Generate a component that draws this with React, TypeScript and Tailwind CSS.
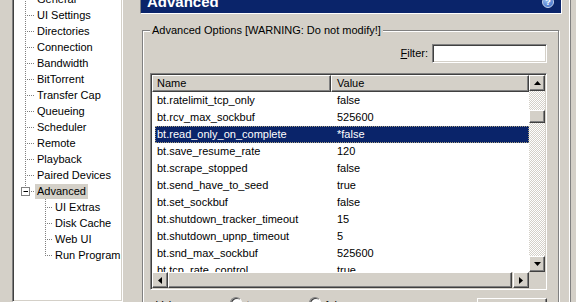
const rows: [string, string][] = [
  ["bt.ratelimit_tcp_only", "false"],
  ["bt.rcv_max_sockbuf", "525600"],
  ["bt.read_only_on_complete", "*false"],
  ["bt.save_resume_rate", "120"],
  ["bt.scrape_stopped", "false"],
  ["bt.send_have_to_seed", "true"],
  ["bt.set_sockbuf", "false"],
  ["bt.shutdown_tracker_timeout", "15"],
  ["bt.shutdown_upnp_timeout", "5"],
  ["bt.snd_max_sockbuf", "525600"],
  ["bt.tcp_rate_control", "true"],
];

const topItems = [
  "General",
  "UI Settings",
  "Directories",
  "Connection",
  "Bandwidth",
  "BitTorrent",
  "Transfer Cap",
  "Queueing",
  "Scheduler",
  "Remote",
  "Playback",
  "Paired Devices",
];

const subItems = ["UI Extras", "Disk Cache", "Web UI", "Run Program"];

const raised =
  "border border-t-white border-l-white border-b-[#404040] border-r-[#404040] shadow-[inset_-1px_-1px_0_#808080]";
const sunken =
  "border border-t-[#808080] border-l-[#808080] border-b-white border-r-white shadow-[inset_1px_1px_0_#404040,inset_-1px_-1px_0_#d4d0c8]";

type Kind = "top" | "advanced" | "sub" | "subLast";

function Connector({ kind }: { kind: Kind }) {
  if (kind === "top") {
    return (
      <svg width="21" height="16" className="shrink-0">
        <line x1="11.5" y1="0" x2="11.5" y2="16" stroke="#808080" strokeDasharray="1 1" />
        <line x1="13" y1="8.5" x2="21" y2="8.5" stroke="#808080" strokeDasharray="1 1" />
      </svg>
    );
  }
  if (kind === "advanced") {
    return (
      <svg width="21" height="16" className="shrink-0">
        <line x1="11.5" y1="0" x2="11.5" y2="4" stroke="#808080" strokeDasharray="1 1" />
        <rect x="7.5" y="4.5" width="8" height="8" fill="#fff" stroke="#808080" />
        <line x1="9.5" y1="8.5" x2="14" y2="8.5" stroke="#000" />
        <line x1="17" y1="8.5" x2="21" y2="8.5" stroke="#808080" strokeDasharray="1 1" />
      </svg>
    );
  }
  return (
    <svg width="39" height="16" className="shrink-0">
      <line
        x1="31.5"
        y1="0"
        x2="31.5"
        y2={kind === "subLast" ? 9 : 16}
        stroke="#808080"
        strokeDasharray="1 1"
      />
      <line x1="33" y1="8.5" x2="39" y2="8.5" stroke="#808080" strokeDasharray="1 1" />
    </svg>
  );
}

function TreeRow({ label, kind, selected }: { label: string; kind: Kind; selected?: boolean }) {
  return (
    <div className="flex h-[16px] items-center">
      <Connector kind={kind} />
      <span
        className={`px-[2px] leading-[15px] whitespace-nowrap ${selected ? "bg-[#d4d0c8]" : ""}`}
      >
        {label}
      </span>
    </div>
  );
}

function Arrow({ dir }: { dir: "up" | "down" | "left" | "right" }) {
  const pts = {
    up: "3.5,0 7,4 0,4",
    down: "0,0 7,0 3.5,4",
    left: "4,0 4,7 0,3.5",
    right: "0,0 4,3.5 0,7",
  }[dir];
  const vertical = dir === "up" || dir === "down";
  return (
    <svg width={vertical ? 7 : 4} height={vertical ? 4 : 7}>
      <polygon points={pts} fill="#000" />
    </svg>
  );
}

function ScrollButton({ dir }: { dir: "up" | "down" | "left" | "right" }) {
  return (
    <div className={`flex h-[16px] w-[16px] shrink-0 items-center justify-center bg-[#d4d0c8] ${raised}`}>
      <Arrow dir={dir} />
    </div>
  );
}

const track =
  "bg-[repeating-conic-gradient(#d4d0c8_0_25%,#ffffff_0_50%)] bg-size-[2px_2px]";

function OptionsList() {
  return (
    <div className={`flex h-[217px] w-[397px] flex-col bg-white ${sunken} p-px`}>
      <div className="flex min-h-0 flex-1">
        <div className="flex min-w-0 flex-1 flex-col overflow-hidden">
          <div className="flex h-[17px] shrink-0 bg-[#d4d0c8]">
            <div className={`flex w-[179px] items-center pl-[4px] ${raised}`}>Name</div>
            <div className={`flex flex-1 items-center pl-[5px] ${raised}`}>Value</div>
          </div>
          {rows.map(([name, value], i) => {
            const selected = i === 2;
            return (
              <div
                key={name}
                className={`ml-[3px] flex h-[17px] shrink-0 items-center ${
                  selected ? "border border-dotted border-[#a8a080] bg-[#0a246a] text-white" : "border border-transparent"
                }`}
              >
                <div className="w-[175px] pl-[1px] whitespace-nowrap">{name}</div>
                <div className="pl-[6px]">{value}</div>
              </div>
            );
          })}
        </div>
        <div className="flex w-[16px] flex-col">
          <ScrollButton dir="up" />
          <div className={`flex-1 ${track}`}>
            <div className={`mt-[19px] h-[13px] bg-[#d4d0c8] ${raised}`} />
          </div>
          <ScrollButton dir="down" />
        </div>
      </div>
      <div className="flex h-[16px] shrink-0 bg-[#d4d0c8]">
        <ScrollButton dir="left" />
        <div className={`mr-px flex-1 ${raised}`} />
        <ScrollButton dir="right" />
        <div className="w-[16px]" />
      </div>
    </div>
  );
}

function Radio() {
  return (
    <span className="inline-block h-[12px] w-[12px] shrink-0 rounded-full border border-t-[#808080] border-l-[#808080] border-b-white border-r-white bg-white shadow-[inset_1px_1px_0_#404040]" />
  );
}

export default function App() {
  return (
    <div className="flex h-[302px] w-[576px] items-start overflow-hidden bg-[#d4d0c8] font-['Liberation_Sans',Arial,sans-serif] text-[11px] text-black">
      <div className={`ml-[12px] mt-[-11px] h-[313px] w-[111px] shrink-0 bg-white ${sunken} p-px`}>
        {topItems.map((t) => (
          <TreeRow key={t} label={t} kind="top" />
        ))}
        <TreeRow label="Advanced" kind="advanced" selected />
        {subItems.map((t, i) => (
          <TreeRow key={t} label={t} kind={i === subItems.length - 1 ? "subLast" : "sub"} />
        ))}
      </div>

      <div className="ml-[17px] flex h-full w-[422px] shrink-0 flex-col">
        <div className="flex h-[14px] shrink-0 items-start justify-between overflow-hidden border-l border-r border-b border-l-[#808080] border-r-white border-b-white bg-[#0a246a] pl-[6px] pr-[7px]">
          <span className="mt-[-6px] text-[15px] leading-[15px] font-bold text-white">Advanced</span>
          <span className="mt-[-4px] flex h-[12px] w-[12px] items-center justify-center rounded-full border border-[#c8d8f0] bg-[radial-gradient(circle_at_35%_30%,#9cc0f0,#2f5fc0)] text-[9px] leading-none font-bold text-white">
            ?
          </span>
        </div>

        <fieldset className="mt-[9px] ml-[2px] w-[417px] border border-[#808080] pr-[11px] pb-[20px] pl-[7px] shadow-[1px_1px_0_#ffffff,inset_1px_1px_0_#ffffff]">
          <legend className="bg-[#d4d0c8] px-[2px] leading-[14px]">
            Advanced Options [WARNING: Do not modify!]
          </legend>
          <div className="mt-[7px] flex items-center justify-end gap-[4px]">
            <span>
              <span className="underline">F</span>ilter:
            </span>
            <div className={`h-[19px] w-[115px] bg-white ${sunken}`} />
          </div>
          <div className="mt-[10px]">
            <OptionsList />
          </div>
          <div className="mt-[7px] flex items-start">
            <span className="ml-[6px] mt-[2px] leading-[13px]">Value:</span>
            <span className="ml-[44px]">
              <Radio />
            </span>
            <span className="ml-[4px] mt-[2px] leading-[13px]">true</span>
            <span className="ml-[44px]">
              <Radio />
            </span>
            <span className="ml-[4px] mt-[2px] leading-[13px]">false</span>
            <button className={`ml-auto mt-[1px] h-[23px] w-[70px] bg-[#d4d0c8] ${raised}`}>Reset</button>
          </div>
        </fieldset>
      </div>

      <div className="ml-[7px] h-full w-[2px] shrink-0 border-l border-r border-l-white border-r-[#808080]" />
    </div>
  );
}
